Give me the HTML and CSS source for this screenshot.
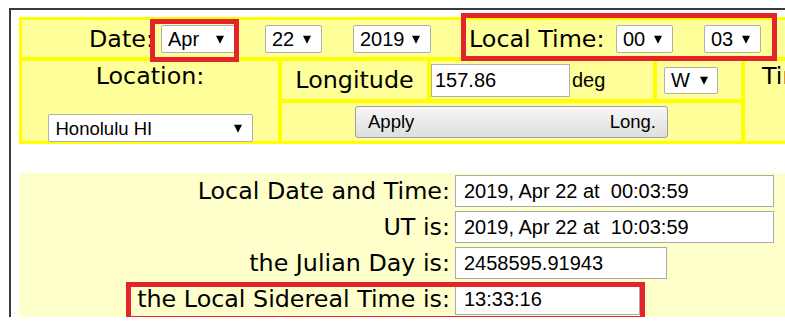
FILE: index.html
```html
<!DOCTYPE html>
<html lang="en">
<head>
  <meta charset="UTF-8" />
  <title>Local Sidereal Time</title>
  <meta name="viewport" content="width=device-width, initial-scale=1.0" />
  <link rel="stylesheet" href="styles.css">
</head>
<body>

  <div class="frame">

    <div class="controls">

      <div class="cell head">
        <span class="label date-label">Date:</span>
        <span class="sel sel-mon">
          <select><option>Mar</option><option selected>Apr</option><option>May</option></select>
        </span>
        <span class="sel sel-day">
          <select><option>21</option><option selected>22</option><option>23</option></select>
        </span>
        <span class="sel sel-year">
          <select><option>2018</option><option selected>2019</option><option>2020</option></select>
        </span>
        <span class="label time-label">Local Time:</span>
        <span class="sel sel-hour">
          <select><option selected>00</option><option>01</option></select>
        </span>
        <span class="sel sel-min">
          <select><option>02</option><option selected>03</option></select>
        </span>

        <!-- annotation boxes -->
        <span class="mark mark-date"></span>
        <span class="mark mark-time"></span>
      </div>

      <div class="cell loc">
        <span class="label">Location:</span>
        <span class="sel sel-loc">
          <select><option selected>Honolulu HI</option><option>Other</option></select>
        </span>
      </div>

      <div class="lon">
        <div class="cell lon-label"><span class="label">Longitude</span></div>
        <div class="cell lon-value">
          <input type="text" class="lon-input" value="157.86">
          <span class="unit">deg</span>
        </div>
        <div class="cell lon-dir">
          <span class="sel sel-dir">
            <select><option>E</option><option selected>W</option></select>
          </span>
        </div>
        <div class="cell apply">
          <button type="button"><span>Apply</span><span>Long.</span></button>
        </div>
      </div>

      <div class="cell tz"><span class="label">Time Zone:</span></div>

    </div>

    <div class="results">
      <div class="row">
        <span class="label">Local Date and Time:</span>
        <input type="text" class="out out-wide" value="2019, Apr 22 at  00:03:59">
      </div>
      <div class="row">
        <span class="label">UT is:</span>
        <input type="text" class="out out-wide" value="2019, Apr 22 at  10:03:59">
      </div>
      <div class="row">
        <span class="label">the Julian Day is:</span>
        <input type="text" class="out out-mid" value="2458595.91943">
      </div>
      <div class="row is-marked">
        <span class="label">the Local Sidereal Time is:</span>
        <input type="text" class="out out-short" value="13:33:16">
      </div>
    </div>

  </div>

</body>
</html>
```

FILE: styles.css
```css
html,
body {
  margin: 0;
  overflow: hidden;
}

body {
  background: #fff;
  font-family: "DejaVu Sans", sans-serif;
  color: #000;
}

.frame {
  width: 1000px;
  margin: 8px 0 0 9px;
  padding: 7px 0 0 8px;
  border-top: 2px solid #3a3a3a;
  border-left: 2px solid #3a3a3a;
}

.label {
  font-size: 23.8px;
  white-space: nowrap;
}

/* top yellow control table */
.controls {
  display: grid;
  grid-template-columns: 256px 459px 220px;
  grid-template-rows: 37px 80px;
  gap: 4px;
  width: max-content;
  padding: 3px;
  background: #ffff00;
}

.cell {
  background: #ffff99;
}

.head {
  grid-column: 1 / -1;
  position: relative;
  display: flex;
  align-items: center;
  padding-left: 67px;
}

.date-label { width: 61px; }
.time-label { width: 133px; margin-left: 38px; }

.sel {
  position: relative;
  display: inline-block;
  flex: none;

  select {
    appearance: none;
    display: block;
    inline-size: 100%;
    block-size: 100%;
    margin: 0;
    padding: 0 0 0 6px;
    border: 1px solid #b0b0b0;
    border-radius: 2px;
    background: #fff;
    font-family: "Liberation Sans", Arial, sans-serif;
    font-size: 20px;
    color: #000;
  }

  &::after {
    content: "";
    position: absolute;
    right: 11px;
    top: 50%;
    translate: 0 -40%;
    border-left: 4.5px solid transparent;
    border-right: 4.5px solid transparent;
    border-top: 8px solid #000;
    pointer-events: none;
  }
}

.head .sel { height: 28px; }
.sel-mon  { width: 74px; margin-left: 11px; }
.sel-day  { width: 57px; margin-left: 30px; }
.sel-year { width: 78px; margin-left: 31px; }
.sel-hour { width: 57px; margin-left: 14px; }
.sel-min  { width: 57px; margin-left: 31px; }

.mark {
  position: absolute;
  box-sizing: border-box;
  border: 5px solid #e3242b;
  pointer-events: none;
}

.mark-date { left: 128px; top: -1px; width: 89px; height: 43px; }
.mark-time { left: 439px; top: -7px; width: 316px; height: 48px; }

.loc {
  display: flex;
  flex-direction: column;
  align-items: center;
  justify-content: space-between;
  padding-top: 1px;
}

.sel-loc {
  width: 205px;
  height: 28px;
  margin-bottom: -1px;

  select { font-size: 18.5px; padding-left: 7px; }
}

.lon {
  display: grid;
  grid-template-columns: 145px 222px 84px;
  grid-template-rows: 38px 38px;
  gap: 4px;
}

.lon-label {
  display: flex;
  align-items: center;
  justify-content: center;
}

.lon-value {
  display: flex;
  align-items: center;
  font-family: "Liberation Sans", Arial, sans-serif;
  font-size: 20px;
}

.lon-input {
  box-sizing: border-box;
  width: 139px;
  height: 33px;
  margin: 1px 0 0;
  padding: 0 3px;
  border: 1px solid #b0b0b0;
  font-family: inherit;
  font-size: 20px;
}

.unit { margin-left: 2px; }

.lon-dir {
  display: flex;
  align-items: center;
  padding-left: 7px;
}

.sel-dir { width: 54px; height: 27px; }
.sel-dir::after { right: 10px; }

.apply {
  grid-column: 1 / -1;
  display: flex;
  align-items: center;
  justify-content: center;

  button {
    display: flex;
    justify-content: space-between;
    align-items: center;
    box-sizing: border-box;
    width: 313px;
    height: 32px;
    padding: 0 11px 0 12px;
    border: 1px solid #a0a0a0;
    border-radius: 3px;
    background: linear-gradient(#f7f7f7, #dedede);
    font-family: "Liberation Sans", Arial, sans-serif;
    font-size: 18.5px;
    color: #000;
  }
}

.tz {
  padding: 1px 0 0 17px;
  overflow: hidden;
}

/* lower result rows */
.results {
  display: grid;
  row-gap: 4px;
  margin-top: 29px;
  padding: 2px 0;
  background: #ffffcc;
}

.row {
  position: relative;
  display: grid;
  grid-template-columns: 431px auto;
  column-gap: 5px;
  align-items: center;
  justify-items: start;

  .label { justify-self: end; }

  &.is-marked::after {
    content: "";
    position: absolute;
    left: 107px;
    top: -1px;
    width: 519px;
    height: 39px;
    box-sizing: border-box;
    border: 5px solid #e3242b;
  }
}

.out {
  box-sizing: border-box;
  height: 32px;
  margin: 0;
  padding: 0 8px;
  border: 1px solid #aaa;
  background: #fff;
  font-family: "Liberation Sans", Arial, sans-serif;
  font-size: 20px;
  color: #000;
}

.out-wide  { width: 319px; }
.out-mid   { width: 212px; }
.out-short { width: 185px; }
```
